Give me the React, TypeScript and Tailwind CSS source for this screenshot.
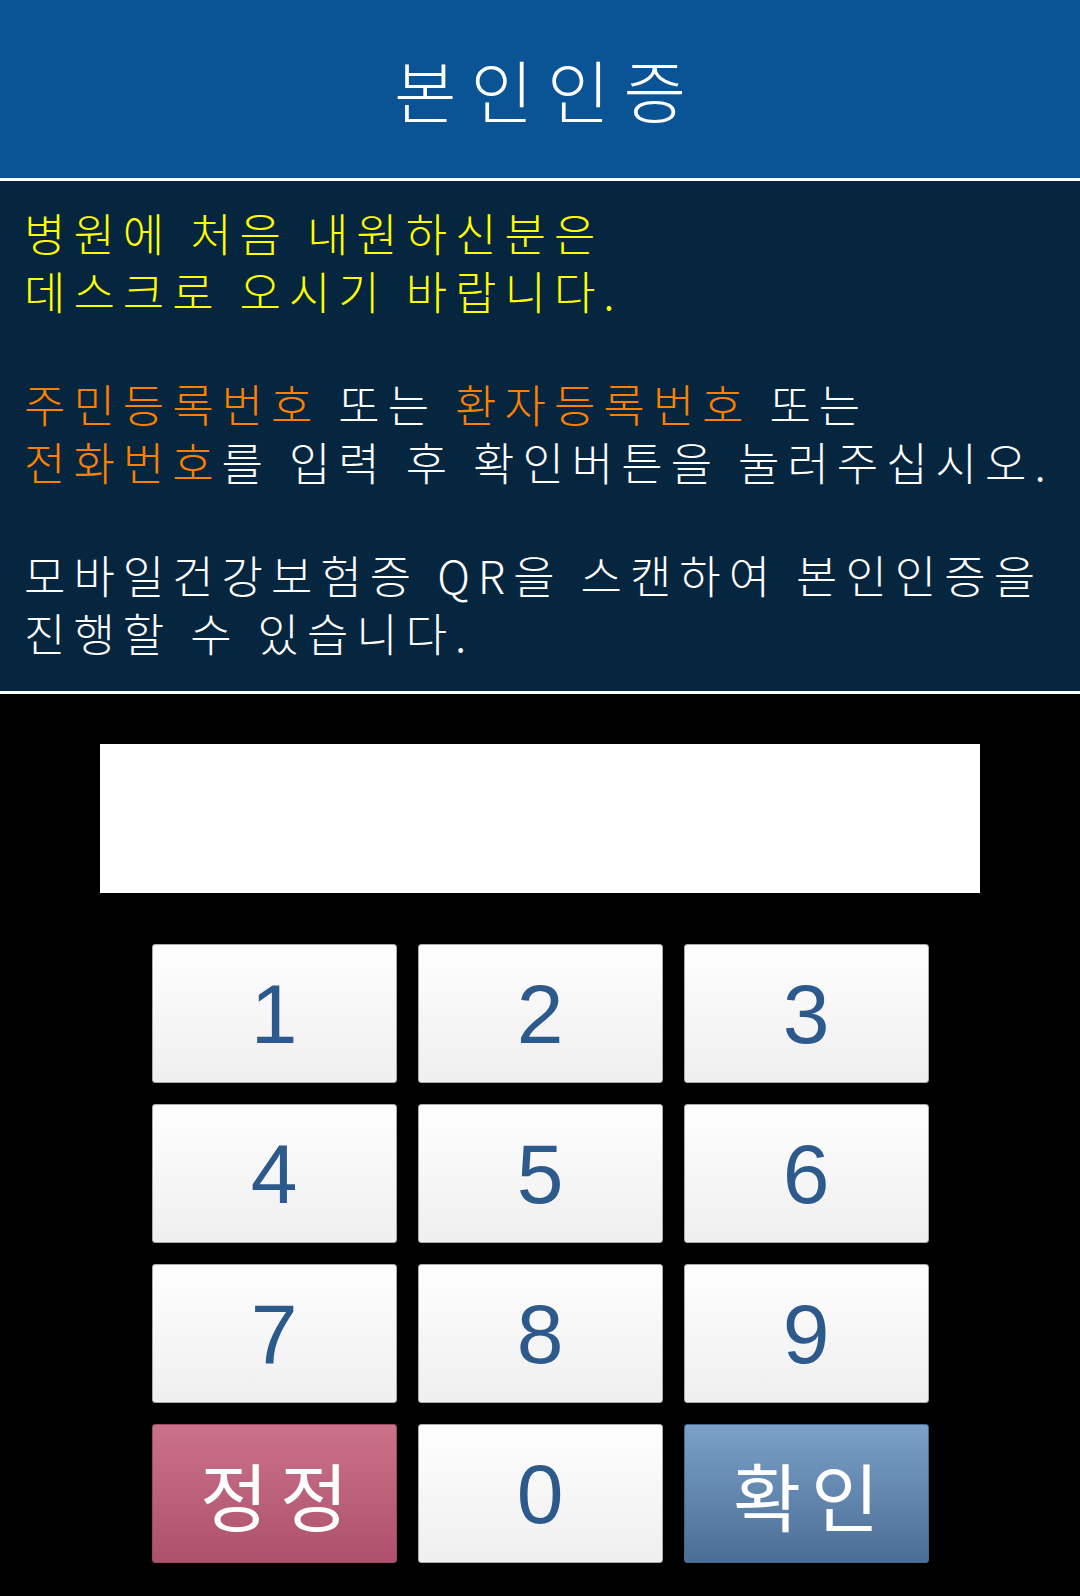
import React from "react";

const keys = ["1", "2", "3", "4", "5", "6", "7", "8", "9"];

function Key({ label }: { label: string }) {
    return (
        <button className="h-[139px] rounded-[3px] border border-[#a9a9a9] bg-gradient-to-b from-[#fefefe] to-[#efefef] flex items-center justify-center font-['Liberation_Sans',Arial,sans-serif] text-[84px] leading-none text-[#2d5a8c]">
            {label}
        </button>
    );
}

export default function App() {
    return (
        <div className="w-[1080px] h-[1596px] bg-black flex flex-col font-['Noto_Sans_CJK_KR',sans-serif]">
            {/* Header */}
            <header className="h-[178px] bg-[#0a5496] flex items-center justify-center">
                <h1 className="pl-[14px] text-[68px] font-light tracking-[14px] text-white leading-none">본인인증</h1>
            </header>
            <div className="h-[3px] bg-white" />

            {/* Guide text */}
            <section className="h-[510px] bg-[#06263f] pl-[24px] pt-[23px] text-[45px] leading-[58px] font-light tracking-[8px] [word-spacing:0px] whitespace-nowrap">
                <p className="text-[#ffff00]">
                    병원에 처음 내원하신분은
                    <br />
                    데스크로 오시기 바랍니다.
                </p>
                <p className="mt-[55px] text-white">
                    <span className="text-[#ff8000]">주민등록번호</span> 또는{" "}
                    <span className="text-[#ff8000]">환자등록번호</span> 또는
                    <br />
                    <span className="text-[#ff8000]">전화번호</span>를 입력 후 확인버튼을 눌러주십시오.
                </p>
                <p className="mt-[55px] text-white">
                    모바일건강보험증 QR을 스캔하여 본인인증을
                    <br />
                    진행할 수 있습니다.
                </p>
            </section>
            <div className="h-[3px] bg-white" />

            {/* Input + keypad */}
            <div className="flex flex-col items-center pt-[50px]">
                <div className="w-[880px] h-[149px] bg-white" />
                <div className="mt-[51px] grid grid-cols-[245px_245px_245px] gap-x-[21px] gap-y-[21px]">
                    {keys.map((k) => (
                        <Key key={k} label={k} />
                    ))}
                    <button className="h-[139px] rounded-[3px] border border-[#9c4a62] bg-gradient-to-b from-[#ca7289] to-[#ae516c] flex items-center justify-center pl-[12px] text-[74px] tracking-[12px] leading-none text-white">
                        정정
                    </button>
                    <Key label="0" />
                    <button className="h-[139px] rounded-[3px] border border-[#47688f] bg-gradient-to-b from-[#7ba1c7] to-[#4b6e97] flex items-center justify-center pl-[10px] text-[74px] tracking-[10px] leading-none text-white">
                        확인
                    </button>
                </div>
            </div>
        </div>
    );
}
